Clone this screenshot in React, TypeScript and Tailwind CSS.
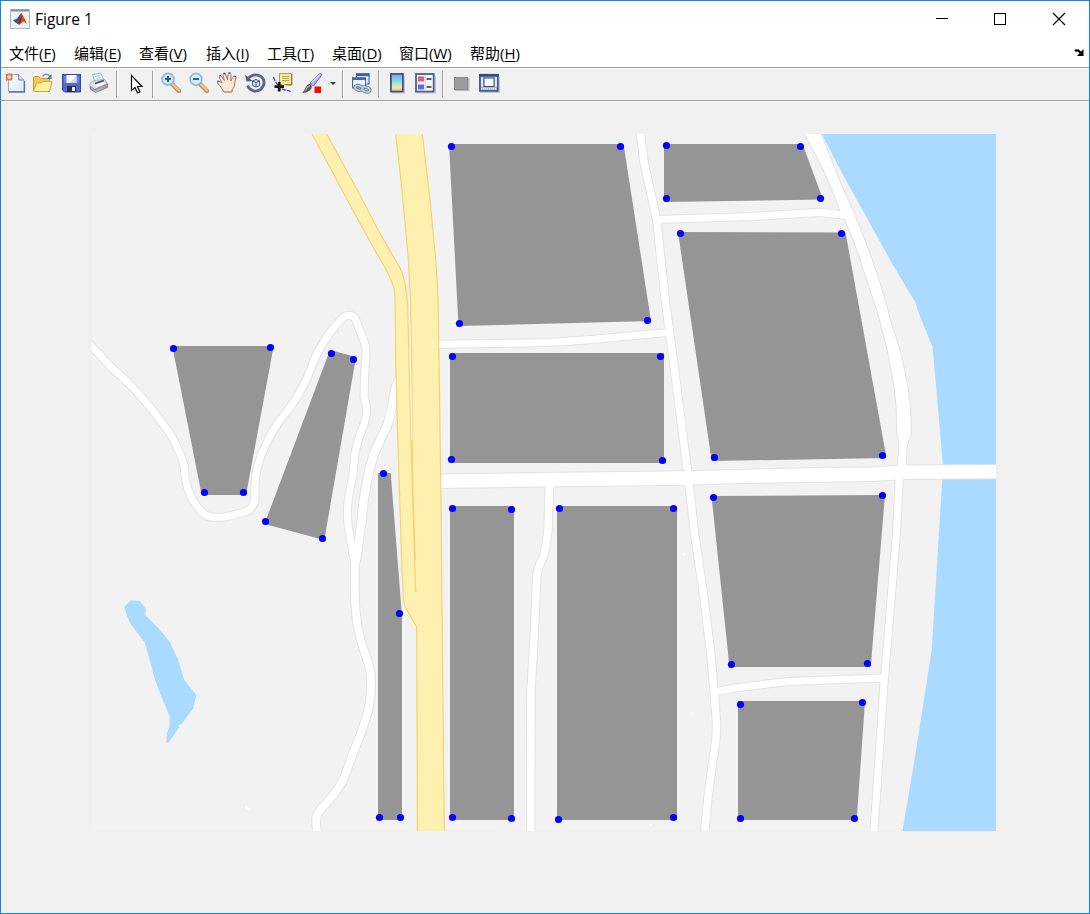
import React from 'react';

type Pt = [number, number];

const menus = [
  { label: '文件', key: 'F', cls: 'w-[65px]' },
  { label: '编辑', key: 'E', cls: 'w-[65px]' },
  { label: '查看', key: 'V', cls: 'w-[67px]' },
  { label: '插入', key: 'I', cls: 'w-[61px]' },
  { label: '工具', key: 'T', cls: 'w-[65px]' },
  { label: '桌面', key: 'D', cls: 'w-[67px]' },
  { label: '窗口', key: 'W', cls: 'w-[71px]' },
  { label: '帮助', key: 'H', cls: 'w-[65px]' },
];

const blocks = [
  '449,144 623.5,144 651,321 458.5,326',
  '664,144 802.5,144 823,199.5 664,202',
  '678,232 845.5,232.5 886.5,458 711.7,461',
  '450,353 664,353 664,463 450,463',
  '711.5,496 885,495 870.7,667 729.5,667',
  '738,701 865,701 856.7,820 738,820',
  '450,506 514,506 514,820 450,820',
  '557,506 677,506 677,820 557,820',
  '378,473 390.7,473 402,616 402,820 378,820',
  '172.3,346 273.7,346 246,495 201.7,495',
  '330,350 356,357 324.3,540 264.5,524',
];

const dots: Pt[] = [
  [451.5, 146.5], [620.5, 146.5], [647.5, 320.5], [459.5, 323.5],
  [666.5, 145.5], [800.5, 146.5], [820.5, 198.5], [666.5, 198.5],
  [680.5, 233.5], [841.5, 233.5], [882.5, 455.5], [714.5, 457.5],
  [452.5, 356.5], [660.5, 356.5], [662.5, 460.5], [451.5, 459.5],
  [713.5, 497.5], [882.5, 495.5], [867.5, 663.5], [731.5, 664.5],
  [740.5, 704.5], [862.5, 702.5], [854.5, 818.5], [740.5, 818.5],
  [452.5, 508.5], [511.5, 509.5], [511.5, 818.5], [452.5, 817.5],
  [559.5, 508.5], [673.5, 508.5], [673.5, 817.5], [558.5, 819.5],
  [383.5, 473.5], [399.5, 613.5], [400.5, 817.5], [379.5, 817.5],
  [173.5, 348.5], [270.5, 347.5], [243.5, 492.5], [204.5, 492.5],
  [331.5, 353.5], [353.5, 359.5], [322.5, 538.5], [265.5, 521.5],
];

const roads: { d: string; w: number }[] = [
  { w: 7, d: 'M88 342.5L92 346.7L113 369Q126 380 136.7 391.7Q153 410 165 426.7Q175 440 178.3 450Q183 459 184.3 466.7Q185 483 189 491.7Q193 502 200 510Q205 516 210 516.7Q218 518 226.7 516.7L243 512.5Q253 509.5 255 500Q254 485 256.7 470Q260 456 266.7 443Q272 431 280 420Q292 406 300 391.7Q308 378 313 363Q317 352 323 343Q331 330 340 321Q344 315 350 315.3Q354 316 356.7 321.7Q361 334 365 344Q367 352 365 366.7L364 396.7Q366 402 366.7 410Q366.5 418 363 426.7Q357 442 355 453Q354 465 352.7 476.7Q348 497 347.7 506.7Q347 515 348.3 526.7L353.5 558' },
  { w: 8.2, d: 'M400 377Q395 388 394 396Q391 415 386.7 426.7Q377 446 373 456.7Q369 470 366.7 483Q363 501 361.7 520Q359 540 355.8 562' },
  { w: 7.6, d: 'M355 552L354.8 590Q355 613 358.3 630Q362 647 368.3 663Q371.5 674 371 683Q371 698 368.3 710Q362 733 353 753Q347 771 341.7 783Q333 797 320 810Q316 815 316 820Q316 827 318 836' },
  { w: 7.4, d: 'M640 130L644 162L656.7 220L665.3 300L677 389L688 475L695 536.7L703.3 593L710.7 653L714 690L716.5 722Q717 735 714 753L708 797L704.3 836' },
  { w: 7.2, d: 'M656.7 219.5Q705 218 753 216.5Q790 214 820 212.3L848 215.5' },
  { w: 7, d: 'M899.5 474L896.7 530L888 636.7L884 683L878 773L873.6 836' },
  { w: 13.4, d: 'M434 481.2L580 479.3L686.7 478Q760 475.5 873 474.2L906.7 472.3L1000 471.6' },
  { w: 7, d: 'M436 344.2Q500 343.8 546.7 342.5Q575 341 596.7 339L668 332.4' },
  { w: 7.4, d: 'M549.4 482L548 530Q546 548 543.3 556.7Q537 569 536.7 578L534 640L531 690L530.6 836' },
  { w: 7, d: 'M715 692Q736 687 760 685Q778 682 800 681Q830 680 884 678' },
];

const coast =
  'M803 130L820 162Q830 183 840.5 211L845 219Q857 246 864.500 272Q874 300 881 323L889.500 358L894 385Q897.500 405 897.300 432L899.500 446L897 472H906L906.500 447L910.700 434Q911.500 410 907.500 387L901 355L890 320Q884 295 872.500 262Q856 216 843 190L819 130Z';

function MapView() {
  return (
    <svg className="block h-[697px] w-[904px]" viewBox="92 134 904 697">
      <rect x="92" y="134" width="904" height="697" fill="#f2f2f2" />
      <path fill="#aadaff" d="M821.7 134L843 175L893 265L906 287L915 301.7L921 319L932.5 347L936 385L939 420L942.8 465L942 483L937 565L931.7 650L915 757L902.3 832H996V134Z" />
      <path fill="#aadaff" d="M124.3 607L130.7 600.3L140 601L146 609.3L145.3 615L161.7 631.7L170 642.3L178.3 660L184.3 680L196.3 695L193.3 708.3L181.7 724L178 725.5L179.3 727.3L168.3 742.7H166.3L167 732.7L169.7 726.7V716.7L160 693L155 680L149.3 658L145 643L130.7 624L127.3 616.7Z" />
      <g fill="none" stroke="#e3e3e3" strokeLinejoin="round">
        {roads.map((r, i) => <path key={i} d={r.d} strokeWidth={r.w + 2} />)}
        <path d={coast} strokeWidth="2" />
      </g>
      <g fill="none" stroke="#fff" strokeLinejoin="round">
        {roads.map((r, i) => <path key={i} d={r.d} strokeWidth={r.w} />)}
        <path d={coast} fill="#fff" stroke="none" />
      </g>
      <path d="M245 806l5 4" stroke="#fff" strokeWidth="2" />
      <path d="M683 554h2M691 714h1M650 825h2" stroke="#fbfbfb" strokeWidth="2" />
      <path fill="#fef0ae" d="M312 134H326.7L360 195L378 230L400 268Q406 280 407.7 305L409.3 375L412 477L415 560L412.7 480L411.9 375L410.5 300L408.3 258L402 190L395.7 134H422.3L430 200L435 252Q438 285 438.3 312L439.2 372L441 503L442.3 640L444.3 832H417.4L416.7 627L408 612Q403.3 605 403.3 596L402 570L397.5 430L396 375L395 298Q395 289 391.7 281.7Q387 270 377 254L350 205Z" />
      <g fill="none" stroke="#f8d173" strokeWidth="1.2">
        <path d="M312 134L350 205L377 254Q387 270 391.7 281.7Q395 289 395 298L396 375L397.5 430L402 570L403.3 596Q403.3 605 408 612L416.7 627L417.4 832" />
        <path d="M326.7 134L360 195L378 230L400 268Q406 280 407.7 305L409.3 375L412 477L415.7 592" />
        <path d="M395.7 134L402 190L408.3 258L410.5 300L411.9 375L412.7 480L415.2 560" />
        <path d="M422.3 134L430 200L435 252Q438 285 438.3 312L439.2 372L441 503L442.3 640L444.3 832" />
      </g>
      <path d="M409.200 305L410.600 375L412 440" fill="none" stroke="#f4f2ec" strokeWidth="1.200" />
      <path d="M439.500 344.200h3M441.200 481.200h3" stroke="#fff" strokeWidth="7" />
      <g fill="#959595">{blocks.map((p) => <polygon key={p} points={p} />)}</g>
      <g fill="#0000ff">{dots.map(([x, y], i) => <circle key={i} cx={x} cy={y} r="3.6" />)}</g>
    </svg>
  );
}

function Tool({ children }: { children: React.ReactNode }) {
  return <svg className="h-[31px] w-7 shrink-0" viewBox="0 0 28 31">{children}</svg>;
}

function Sep({ cls }: { cls: string }) {
  return (
    <div className={`shrink-0 ${cls}`}>
      <div className="mt-[2px] h-[27px] w-[2px] border-l border-r border-l-[#a0a0a0] border-r-[#fafafa]" />
    </div>
  );
}

function Magnifier({ plus }: { plus: boolean }) {
  return (
    <Tool>
      <path d="M15.5 15.5L22 22" stroke="#c08e55" strokeWidth="4.4" strokeLinecap="round" />
      <path d="M16 15.5L22 21.3" stroke="#f5c47e" strokeWidth="2.4" strokeLinecap="round" />
      <circle cx="11" cy="10.2" r="5.900" fill="#d3edf8" stroke="#93b4de" strokeWidth="1.7" />
      <path d="M8 10h6" stroke="#205b94" strokeWidth="1.900" />
      {plus && <path d="M11 7v6" stroke="#205b94" strokeWidth="1.900" />}
    </Tool>
  );
}

function Toolbar() {
  return (
    <div className="flex h-[31px] bg-[#f0f0f0]">
      <Tool>
        <defs>
          <linearGradient id="sheet" x1="0" y1="0" x2="1" y2="1"><stop offset="0" stopColor="#fff" /><stop offset="1" stopColor="#d9e8fa" /></linearGradient>
        </defs>
        <path d="M7.5 5.5H17.500L23 11V22.500H7.5Z" fill="url(#sheet)" stroke="#98acd0" />
        <path d="M17.500 5.5V11H23" fill="#c5d8f0" stroke="#6c86b5" />
        <path d="M8 23h15.500V12" fill="none" stroke="#5672a8" strokeWidth="1.300" />
        <path d="M5 5l1.500 1.500M11.500 5L10 6.500M5 11.500L6.500 10M11 11l-1-1" stroke="#e27f62" strokeWidth="1.800" />
        <circle cx="8.200" cy="8" r="2.700" fill="#fbd9a8" stroke="#e07050" strokeWidth="1.500" />
      </Tool>
      <Tool>
        <path d="M4.500 21.500V8.500l1-1h4l2 2h9V21.500Z" fill="#f2c958" stroke="#c79a32" />
        <path d="M4.500 22.500l3-8.500h5l1-1.500h9.500l-2.500 10Z" fill="#fff0a0" stroke="#d3a637" />
        <path d="M13.500 7.500q3-4 7-.500" fill="none" stroke="#7a94ba" strokeWidth="1.5" />
        <path d="M22.500 5v5h-5Z" fill="#5277a8" />
      </Tool>
      <Tool>
        <path d="M5.500 5.500h18v17.500H7.500l-2-2Z" fill="#5669c7" stroke="#34479c" />
        <path d="M7 7h3v7H7zM20 7h2v7H20z" fill="#6f80d8" />
        <path d="M9.500 6h10v8h-10z" fill="#f5f8ff" />
        <path d="M12 14l7.500-6v6Z" fill="#c9d6f5" />
        <path d="M10 17h9v6h-9z" fill="#232f60" />
        <path d="M15 18h3v4h-3z" fill="#f3f5fa" />
      </Tool>
      <Tool>
        <path d="M7.500 5.500l8-1.500 4 8-9 3Z" fill="#eaf3fe" stroke="#9eb8d8" />
        <path d="M10 7.500l5-1M11 9.500l5-1" stroke="#b9d1eb" />
        <path d="M5 14.500l4-3 10.500-1 3.500 5.500-14 6-4-2.500Z" fill="#dfe1e4" stroke="#a9adb3" />
        <path d="M5.500 17.500l4 3 13-5.500v3.500l-12 5-5-3.500Z" fill="#a8adb4" stroke="#858a92" />
        <path d="M10 14.500l9-3" stroke="#454a52" strokeWidth="1.500" />
        <path d="M11 17l8-3" stroke="#f9f9f9" strokeWidth="2" />
        <path d="M20 18h2" stroke="#dc6a65" strokeWidth="1.5" />
      </Tool>
      <Sep cls="w-[10px] pl-[3px]" />
      <Tool>
        <path d="M8.500 6.500v15l3.500-3 2.500 5.500 2.500-1-2.500-5.500h4.500Z" fill="#fff" stroke="#111" strokeWidth="1.2" />
      </Tool>
      <Sep cls="w-[6px] pl-[1px]" />
      <Magnifier plus />
      <Magnifier plus={false} />
      <Tool>
        <path d="M9.500 20.500Q7 16.500 4.500 14Q3.500 11.500 6 12L9 14L6 8Q6 5.800 8.300 7L11.300 11.500L9.800 6Q11 3.500 12.700 5.500L14.500 11L15 5Q17 3.200 18 5.700L17.800 12L20.300 7.500Q22.500 6 23 8.500L21.700 14Q22 18 19 21V23H11Z" fill="#ffe9d4" stroke="#9a7c74" strokeWidth="1" strokeLinejoin="round" />
        <path d="M6.500 7l1.500-.5M10.500 4.500h2M15.500 4h2M21.500 7l1.500 1M4.500 12.500l1-.5" stroke="#48526e" strokeWidth="1.300" />
        <path d="M11 23h8" stroke="#d2a074" strokeWidth="1.5" />
      </Tool>
      <Tool>
        <path d="M7.500 9Q12 4.500 18 6.500Q24 9 22.800 15.500Q20.500 22.500 13 22Q8 20.500 6.500 16.500" fill="none" stroke="#566989" strokeWidth="2.800" />
        <path d="M4 5.500l1.500 7 6-.5Z" fill="#495c7c" />
        <path d="M11.500 12l3.500-1.500 3.500 1.500v4.500l-3.500 1.500-3.500-1.500Z" fill="#dde7f1" stroke="#485c7f" />
        <path d="M11.500 12l3.500 1.500 3.500-1.500M15 13.500v4.500" fill="none" stroke="#485c7f" />
      </Tool>
      <Tool>
        <path d="M4.300 8Q6.500 13 9 16.500Q13 20.500 16 21L22 22.500" fill="none" stroke="#3a3cf5" strokeWidth="1.300" strokeDasharray="4 1" />
        <path d="M10.500 4.500h12v11h-6.500l-3 2v-2h-2.500Z" fill="#f3ec9b" stroke="#a8a058" />
        <path d="M22.800 5v11H17" fill="none" stroke="#7d7534" />
        <path d="M13 7.500h7M13 9.500h7M13 11.500h7" stroke="#b3aa62" />
        <path d="M10.200 13v9.500M5.500 17.700h9.500" stroke="#161616" strokeWidth="2.800" />
      </Tool>
      <Tool>
        <path d="M13 14L22.500 4.500L25 5.500L16.500 17Z" fill="#a9b5e8" stroke="#6472b2" />
        <path d="M14 14L22.500 6" stroke="#e2e7fb" strokeWidth="1.200" />
        <path d="M5 23.500Q7.500 22 8.500 18.500Q11 14 13.500 15Q16.500 18.500 12.500 21.500Q9 24.500 5 23.500Z" fill="#575757" />
        <path d="M8.500 21.500Q10 17.500 13 17" stroke="#aaa" fill="none" strokeWidth="1.300" />
        <rect x="17.500" y="17.500" width="6.500" height="6.500" fill="#fb0909" />
      </Tool>
      <svg className="h-[31px] w-4 shrink-0" viewBox="0 0 16 31"><path d="M5 13h6l-3 3Z" fill="#333" /></svg>
      <Sep cls="w-[6px] pl-[1px]" />
      <Tool>
        <rect x="9.500" y="5" width="12.500" height="10" fill="#dce9f8" stroke="#39568d" />
        <path d="M9 5.700h13.500" stroke="#3f5c95" strokeWidth="2.800" />
        <rect x="5.500" y="9" width="13" height="10" fill="#f3f7fd" stroke="#48669b" />
        <path d="M5 9.700h14" stroke="#4a68a0" strokeWidth="2.800" />
        <g fill="none" strokeWidth="3.400" stroke="#5f778f"><ellipse cx="12" cy="19" rx="4" ry="2.300" transform="rotate(15 12 19)" /><ellipse cx="19" cy="20.500" rx="4" ry="2.300" transform="rotate(15 19 20.500)" /></g>
        <g fill="none" strokeWidth="1.800" stroke="#bccddd"><ellipse cx="12" cy="19" rx="4" ry="2.300" transform="rotate(15 12 19)" /><ellipse cx="19" cy="20.500" rx="4" ry="2.300" transform="rotate(15 19 20.500)" /></g>
      </Tool>
      <Sep cls="w-[8px] pl-[3px]" />
      <Tool>
        <defs>
          <linearGradient id="spectrum" x1="0" y1="0" x2="0" y2="1">
            <stop offset="0" stopColor="#a293e9" /><stop offset=".3" stopColor="#7bc9ee" /><stop offset=".55" stopColor="#a8e8c1" /><stop offset=".78" stopColor="#f8e79c" /><stop offset="1" stopColor="#f2a68e" />
          </linearGradient>
        </defs>
        <path d="M9 24h12.500V7" fill="none" stroke="#c4c4c4" />
        <rect x="7.900" y="4.900" width="12" height="17.700" fill="url(#spectrum)" stroke="#3a5590" strokeWidth="1.800" />
      </Tool>
      <Tool>
        <path d="M6 24h18.500V7" fill="none" stroke="#c4c4c4" />
        <rect x="5" y="5" width="17.700" height="17.600" fill="#f3f5fa" stroke="#465f96" strokeWidth="1.800" />
        <path d="M14.500 6v16" stroke="#d4dbe8" />
        <path d="M7 7.500h6v5H7z" fill="#e66161" /><path d="M7 15.500h6v5H7z" fill="#6666e6" />
        <path d="M15.500 10h5M15.500 18h5" stroke="#333" strokeWidth="1.400" />
      </Tool>
      <Sep cls="w-[8px] pl-[3px]" />
      <Tool>
        <path d="M8 9h14.500V22H8Z" fill="#b9b9b9" />
        <rect x="7.500" y="8.500" width="13" height="12" fill="#9c9c9c" stroke="#8b8b8b" />
      </Tool>
      <Tool>
        <path d="M5 23.500h19.500V8" fill="none" stroke="#c4c4c4" />
        <rect x="4.900" y="5.900" width="18" height="16" fill="#b2bcc9" stroke="#3d568c" strokeWidth="1.700" />
        <path d="M4 6.300h19.800" stroke="#304b82" strokeWidth="2.800" />
        <rect x="9" y="9" width="10" height="8.500" fill="#fff" stroke="#304b82" />
        <path d="M7 8.500v9M21 8.500v9" stroke="#eef1f5" strokeWidth="1.500" />
        <path d="M6 19.700h16" stroke="#e3e6dc" strokeWidth="1.500" strokeDasharray="1 1" />
      </Tool>
    </div>
  );
}

export default function App() {
  return (
    <div className="flex h-[914px] w-[1090px] flex-col overflow-hidden border border-[#1883d7] bg-[#f0f0f0] text-black">
      <header className="flex h-[37px] shrink-0 items-center bg-white pb-px pl-[9px]">
        <svg className="h-5 w-5" viewBox="0 0 20 20">
          <rect x=".5" y=".5" width="19" height="19" fill="#edf1f4" stroke="#a9b8c3" />
          <path d="M1 1.500h18" stroke="#7894ac" strokeWidth="2" />
          <path d="M3 11.500l4-2 4-5 .5 6L7.500 15Z" fill="#275b9b" />
          <path d="M11.500 4Q13 6 17 15L13.500 12.500L9 16L7 14Q10 11 11.500 4Z" fill="#d64c20" />
          <path d="M11.500 4q1 6-2 11L7.500 14Q10 11 11.500 4Z" fill="#8b2717" />
        </svg>
        <span className="ml-[5px] font-['Open_Sans',sans-serif] text-[15.5px] leading-5">Figure 1</span>
        <svg className="ml-auto h-5 w-[160px]" viewBox="0 0 160 20" fill="none" stroke="#000" strokeWidth="1" shapeRendering="crispEdges">
          <path d="M7 9.500h12" />
          <rect x="65.500" y="4.500" width="11" height="11" />
          <path d="M124 4l12 12M136 4l-12 12" shapeRendering="auto" strokeWidth="1.200" />
        </svg>
      </header>
      <nav className="flex h-[29px] shrink-0 items-center bg-white pl-2 font-['Open_Sans','Noto_Sans_CJK_SC',sans-serif] text-[15px] leading-5">
        {menus.map((m) => (
          <span key={m.key} className={`${m.cls} shrink-0 whitespace-nowrap`}>
            {m.label}(<span className="underline underline-offset-2">{m.key}</span>)
          </span>
        ))}
        <svg className="mr-[5px] ml-auto h-[10px] w-[10px]" viewBox="0 0 10 10">
          <path d="M1 3Q4 .8 7 5.500" stroke="#000" strokeWidth="2.200" fill="none" /><path d="M9.500 1v7H3Z" fill="#000" />
        </svg>
      </nav>
      <div className="h-[34px] shrink-0 border-t border-b border-[#a0a0a0] shadow-[0_1px_0_#fafafa]">
        <div className="h-px bg-[#fafafa]" />
        <Toolbar />
      </div>
      <main className="flex-1 pt-[33px] pl-[91px]">
        <MapView />
      </main>
    </div>
  );
}
